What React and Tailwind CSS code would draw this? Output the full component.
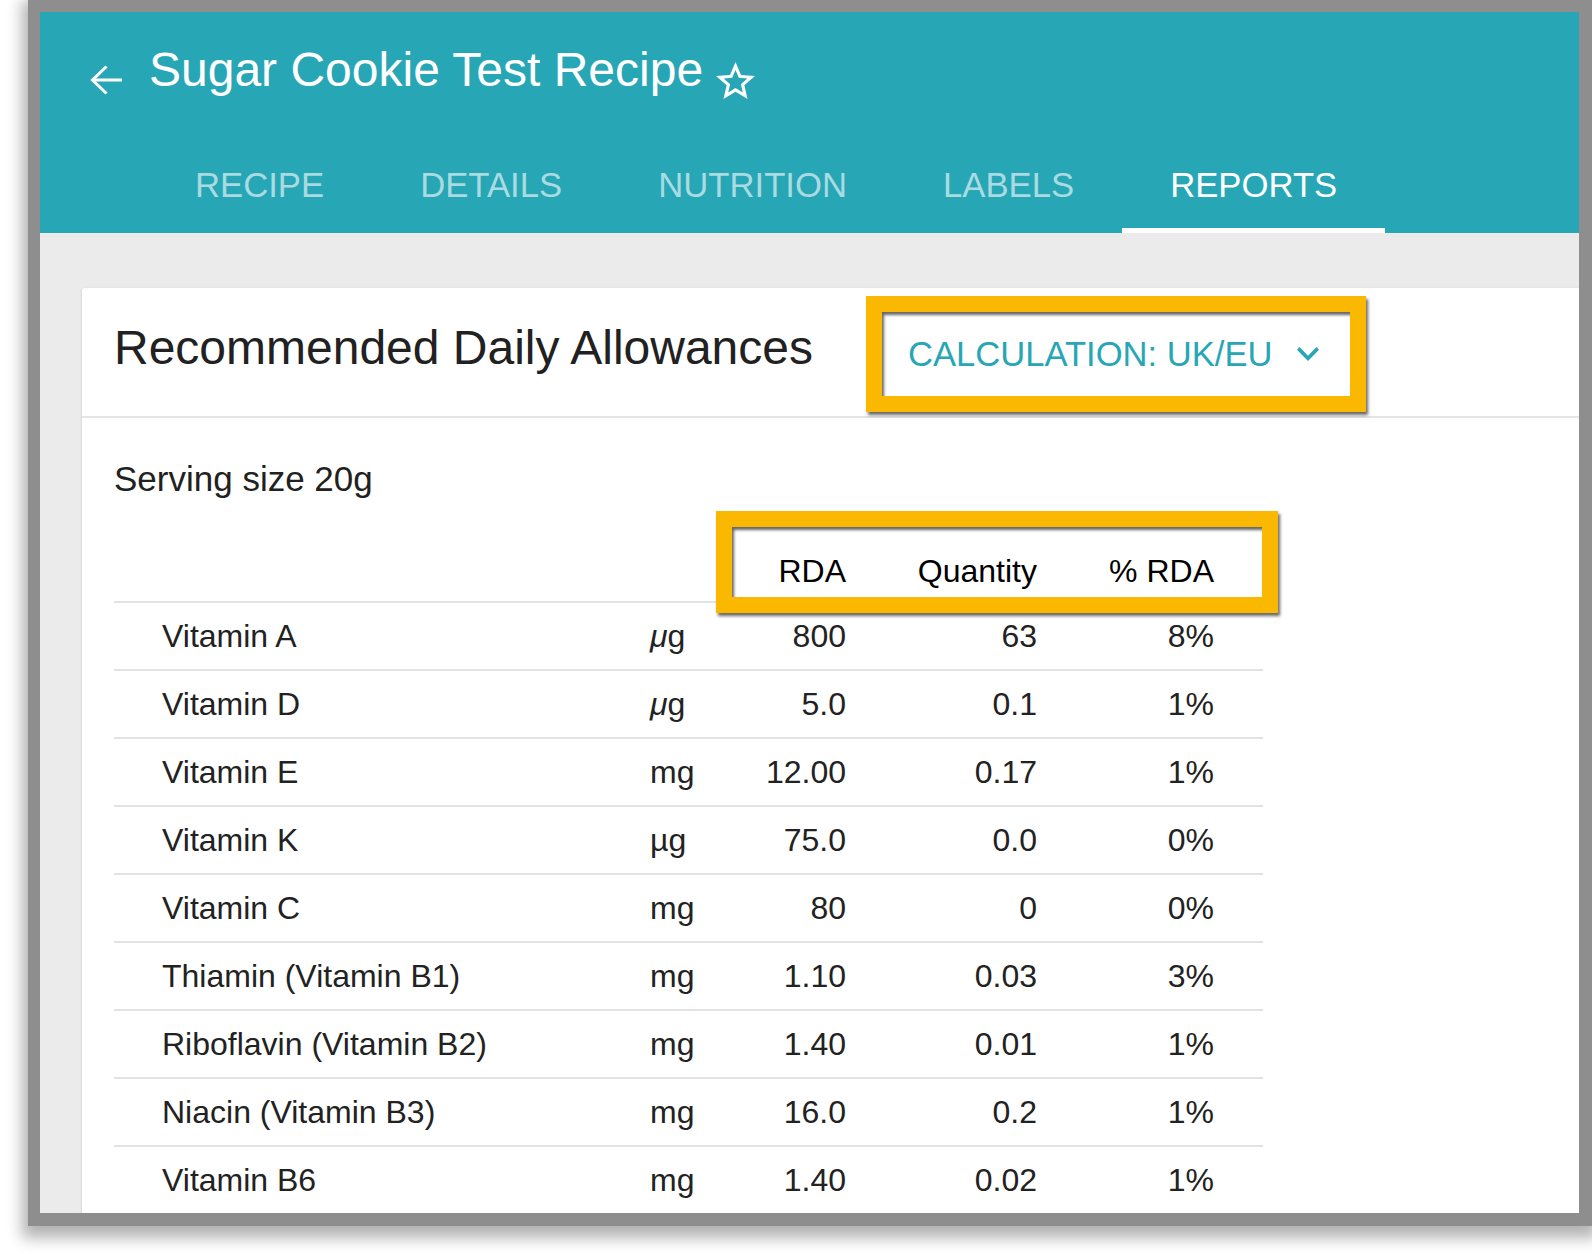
import React from "react";

const tabs = ["RECIPE", "DETAILS", "NUTRITION", "LABELS", "REPORTS"];

const rows = [
  { name: "Vitamin A", unit: "mu", rda: "800", qty: "63", pct: "8%" },
  { name: "Vitamin D", unit: "mu", rda: "5.0", qty: "0.1", pct: "1%" },
  { name: "Vitamin E", unit: "mg", rda: "12.00", qty: "0.17", pct: "1%" },
  { name: "Vitamin K", unit: "µg", rda: "75.0", qty: "0.0", pct: "0%" },
  { name: "Vitamin C", unit: "mg", rda: "80", qty: "0", pct: "0%" },
  { name: "Thiamin (Vitamin B1)", unit: "mg", rda: "1.10", qty: "0.03", pct: "3%" },
  { name: "Riboflavin (Vitamin B2)", unit: "mg", rda: "1.40", qty: "0.01", pct: "1%" },
  { name: "Niacin (Vitamin B3)", unit: "mg", rda: "16.0", qty: "0.2", pct: "1%" },
  { name: "Vitamin B6", unit: "mg", rda: "1.40", qty: "0.02", pct: "1%" },
];

const cols = "grid grid-cols-[536px_110px_86px_191px_177px_49px]";

const Unit = ({ unit }) =>
  unit === "mu" ? (
    <span>
      <span className="italic">μ</span>g
    </span>
  ) : (
    <span>{unit}</span>
  );

const App = () => {
  return (
    <div className="h-[1254px] w-full overflow-hidden bg-white font-['Liberation_Sans',Arial,sans-serif]">
      <div className="ml-[28px] flex h-[1226px] flex-col overflow-hidden border-b-[13px] border-l-[12px] border-r-[13px] border-t-[12px] border-[#8e8e8e] shadow-[0_6px_14px_6px_rgba(0,0,0,0.3)]">
        {/* header */}
        <div className="h-[221px] shrink-0 bg-[#27a6b5] pt-[34px]">
          <div className="flex h-12 items-start pl-[50px]">
            <svg className="mt-[19px] shrink-0" width="32" height="30" viewBox="0 0 32 30" fill="none" stroke="white" strokeWidth="3">
              <path d="M32 15H3" />
              <path d="M16.5 1.5L2.5 15l14 13.5" />
            </svg>
            <h1 className="ml-[27px] text-[48px] leading-none text-white">Sugar Cookie Test Recipe</h1>
            <svg className="ml-[13px] mt-[16px] shrink-0" width="39" height="37" viewBox="2 2 20 19" fill="white">
              <path d="M22 9.24l-7.19-.62L12 2 9.19 8.63 2 9.24l5.46 4.73L5.82 21 12 17.27 18.18 21l-1.63-7.03L22 9.24zM12 15.4l-3.76 2.27 1-4.28-3.32-2.88 4.38-.38L12 6.1l1.71 4.04 4.38.38-3.32 2.88 1 4.28L12 15.4z" />
            </svg>
          </div>
          <div className="mt-[46px] flex h-[93px] pl-[107px]">
            {tabs.map((t) => (
              <div
                key={t}
                className={
                  t === "REPORTS"
                    ? "relative flex items-center px-[48px] pb-[3px] text-[34.7px] leading-none text-white"
                    : "relative flex items-center px-[48px] pb-[3px] text-[34.7px] leading-none text-[#a9dbe1]"
                }
              >
                {t}
                {t === "REPORTS" && <div className="absolute inset-x-0 bottom-0 h-[5px] bg-white" />}
              </div>
            ))}
          </div>
        </div>

        {/* body */}
        <div className="flex-1 bg-[#ebebeb] pl-[42px] pt-[55px]">
          <div className="min-h-[1000px] rounded-tl-[3px] bg-white shadow-[0_1px_3px_rgba(0,0,0,0.15)]">
            <div className="flex h-[130px] items-start border-b-2 border-[#e4e4e4]">
              <h2 className="w-[784px] shrink-0 pl-8 pt-[36px] text-[48px] leading-none text-[#212121]">
                Recommended Daily Allowances
              </h2>
              <div className="mt-[8px] flex h-[116px] w-[500px] shrink-0 items-center border-[16px] border-[#fab800] pl-[26px] shadow-[2px_3px_3px_rgba(0,0,0,0.6),inset_2px_3px_3px_rgba(0,0,0,0.6)]">
                <span className="text-[34.6px] leading-none text-[#27a6b5]">CALCULATION: UK/EU</span>
                <svg className="ml-[25px]" width="22" height="14" viewBox="6 8.59 12 7.41" fill="#27a6b5" preserveAspectRatio="none">
                  <path d="M16.59 8.59L12 13.17 7.41 8.59 6 10l6 6 6-6z" />
                </svg>
              </div>
            </div>

            <div className="px-8">
              <p className="pt-[43px] text-[35px] leading-none text-[#212121]">Serving size 20g</p>

              <div className="relative mt-[59px] w-[1149px]">
                <div className={`${cols} border-b-2 border-[#e2e2e2] pb-[14px] text-[32px] leading-none text-black`}>
                  <div />
                  <div />
                  <div className="text-right">RDA</div>
                  <div className="text-right">Quantity</div>
                  <div className="text-right">% RDA</div>
                  <div />
                </div>

                {rows.map((r) => (
                  <div
                    key={r.name}
                    className={`${cols} h-[68px] items-center border-b-2 border-[#e2e2e2] text-[32px] leading-none text-[#222]`}
                  >
                    <div className="pl-12">{r.name}</div>
                    <Unit unit={r.unit} />
                    <div className="text-right">{r.rda}</div>
                    <div className="text-right">{r.qty}</div>
                    <div className="text-right">{r.pct}</div>
                    <div />
                  </div>
                ))}

                {/* highlight around column heads */}
                <div className="pointer-events-none absolute left-[602px] top-[-44px] h-[102px] w-[562px] border-[16px] border-[#fab800] shadow-[2px_3px_3px_rgba(0,0,0,0.6),inset_2px_3px_3px_rgba(0,0,0,0.6)]" />
              </div>
            </div>
          </div>
        </div>
      </div>
    </div>
  );
};

export default App;
